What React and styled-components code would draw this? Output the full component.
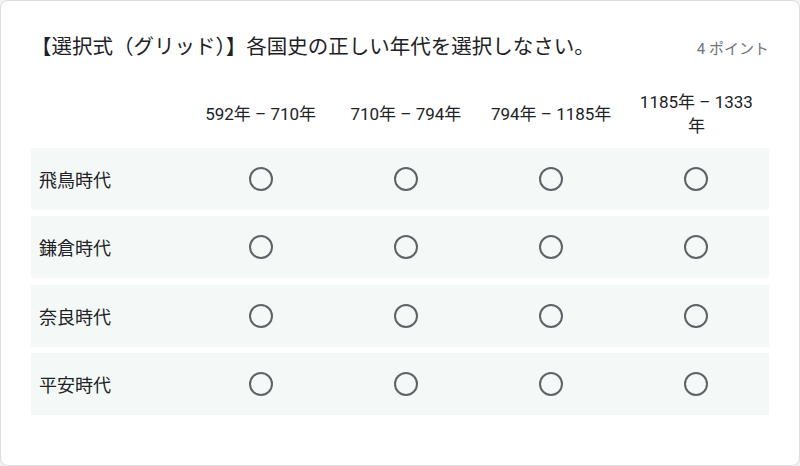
import React from 'react';
import styled, { createGlobalStyle } from 'styled-components';

const GlobalStyle = createGlobalStyle`
    html, body {
        margin: 0;
        padding: 0;
        background: #eef3ef;
    }
    body {
        font-family: Roboto, "Noto Sans CJK JP", sans-serif;
        color: #202124;
    }
`

const Card = styled.div`
    box-sizing: border-box;
    width: 800px;
    height: 466px;
    background: #ffffff;
    border: 1px solid #dadce0;
    border-radius: 8px;
    padding: 30px 30px 0 30px;
`

const Header = styled.div`
    display: flex;
    align-items: center;
    justify-content: space-between;
    height: 32px;
`

const Title = styled.div`
    font-size: 20.5px;
    line-height: 28px;
    color: #202124;
`

const Points = styled.div`
    font-size: 15px;
    color: #70757a;
`

const Grid = styled.div`
    margin-top: 25px;
    display: flex;
    flex-direction: column;
    gap: 6.6px;
`

const ColumnRow = styled.div`
    display: grid;
    grid-template-columns: 157px repeat(4, 1fr);
    align-items: center;
    height: 52px;
    margin-bottom: 1px;
`

const ColumnLabel = styled.div`
    text-align: center;
    font-size: 17px;
    line-height: 24px;
    padding: 0 10px;
    color: #202124;
`

const Row = styled.div`
    display: grid;
    grid-template-columns: 157px repeat(4, 1fr);
    align-items: center;
    height: 62px;
    background: #f4f8f7;
    border-radius: 2px;
`

const RowLabel = styled.div`
    font-size: 18px;
    padding-left: 8px;
    color: #202124;
`

const Cell = styled.div`
    display: flex;
    justify-content: center;
    align-items: center;
`

const Radio = styled.div`
    box-sizing: border-box;
    width: 24px;
    height: 24px;
    border: 2px solid #5f6368;
    border-radius: 50%;
`

const columns = ['592年 – 710年', '710年 – 794年', '794年 – 1185年', '1185年 – 1333年']
const rows = ['飛鳥時代', '鎌倉時代', '奈良時代', '平安時代']

const App = () => {
    return (
        <>
            <GlobalStyle />
            <Card>
                <Header>
                    <Title>【選択式（グリッド）】各国史の正しい年代を選択しなさい。</Title>
                    <Points>4 ポイント</Points>
                </Header>
                <Grid>
                    <ColumnRow>
                        <div />
                        {columns.map((c) => (
                            <ColumnLabel key={c}>{c}</ColumnLabel>
                        ))}
                    </ColumnRow>
                    {rows.map((r) => (
                        <Row key={r}>
                            <RowLabel>{r}</RowLabel>
                            {columns.map((c) => (
                                <Cell key={c}>
                                    <Radio />
                                </Cell>
                            ))}
                        </Row>
                    ))}
                </Grid>
            </Card>
        </>
    )
}

export default App
